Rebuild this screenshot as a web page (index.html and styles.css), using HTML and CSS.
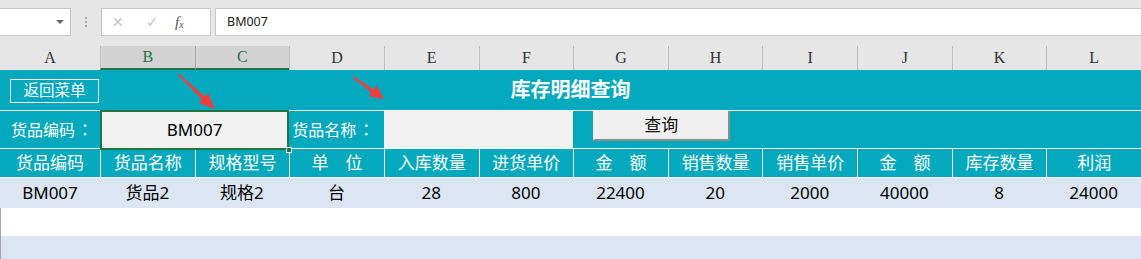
FILE: index.html
```html
<!DOCTYPE html>
<html lang="zh-CN">
<head>
<meta charset="utf-8">
<title>库存明细查询</title>
<link rel="stylesheet" href="styles.css">
</head>
<body>
<div class="page">
  <div class="toolbar">
    <div class="namebox"><span class="dd"></span></div>
    <div class="grip"><i></i><i></i><i></i></div>
    <div class="fxbox">
      <span class="ic-x">✕</span>
      <span class="ic-ok">✓</span>
      <span class="ic-fx">f<sub>x</sub></span>
    </div>
    <div class="formula">BM007</div>
  </div>

  <div class="colheads grid">
    <div class="ch">A</div>
    <div class="ch sel">B</div>
    <div class="ch sel">C</div>
    <div class="ch">D</div>
    <div class="ch">E</div>
    <div class="ch">F</div>
    <div class="ch">G</div>
    <div class="ch">H</div>
    <div class="ch">I</div>
    <div class="ch">J</div>
    <div class="ch">K</div>
    <div class="ch">L</div>
  </div>

  <div class="row r-title">
    <div class="back-cell"><span class="back-btn">返回菜单</span></div>
    <div class="title">库存明细查询</div>
  </div>

  <div class="row r-query grid">
    <div class="label">货品编码<span class="colon">：</span></div>
    <div class="input active">BM007<span class="handle"></span></div>
    <div class="label">货品名称<span class="colon">：</span></div>
    <div class="input"></div>
    <div class="btn-cell"><span class="query-btn">查询</span></div>
  </div>

  <div class="row r-head grid">
    <div>货品编码</div>
    <div>货品名称</div>
    <div>规格型号</div>
    <div>单　位</div>
    <div>入库数量</div>
    <div>进货单价</div>
    <div>金　额</div>
    <div>销售数量</div>
    <div>销售单价</div>
    <div>金　额</div>
    <div>库存数量</div>
    <div>利润</div>
  </div>

  <div class="row r-data grid">
    <div>BM007</div>
    <div>货品2</div>
    <div>规格2</div>
    <div>台</div>
    <div>28</div>
    <div>800</div>
    <div>22400</div>
    <div>20</div>
    <div>2000</div>
    <div>40000</div>
    <div>8</div>
    <div>24000</div>
  </div>

  <div class="row r-empty"></div>
  <div class="row r-empty alt"></div>

  <svg class="arrows" width="1141" height="259" viewBox="0 0 1141 259">
    <polygon points="178.4,73.2 204.7,96.6 208.1,93.1 215,109 198.8,103 202.1,99.5 177.6,74.8"/>
    <polygon points="353.4,76.2 373.7,89.4 376.5,85.6 384,99 368.8,96.2 371.5,92.4 352.6,77.8"/>
  </svg>
</div>
</body>
</html>
```

FILE: styles.css
```css
* { box-sizing: border-box; }

html, body {
  margin: 0;
  padding: 0;
  background: #ffffff;
}

.page {
  position: relative;
  width: 1141px;
  height: 259px;
  overflow: hidden;
  font-family: "Noto Sans", "Noto Sans CJK SC", sans-serif;
}

.grid {
  display: grid;
  grid-template-columns: 100px repeat(11, 1fr);
}

/* ---------- formula bar ---------- */
.toolbar {
  height: 46px;
  background: #e6e6e6;
  display: flex;
  align-items: flex-start;
  padding-top: 8px;
}

.namebox {
  position: relative;
  width: 71px;
  height: 28px;
  background: #ffffff;
  border: 1px solid #c6c6c6;
  border-left: none;
}

.dd {
  position: absolute;
  left: 56px;
  top: 11px;
  width: 0;
  height: 0;
  border-left: 4px solid transparent;
  border-right: 4px solid transparent;
  border-top: 4px solid #666666;
}

.grip {
  width: 30px;
  height: 28px;
  display: flex;
  flex-direction: column;
  align-items: center;
  justify-content: center;
  gap: 2px;
}

.grip i {
  display: block;
  width: 2px;
  height: 2px;
  background: #a8a8a8;
}

.fxbox {
  width: 110px;
  height: 28px;
  background: #ffffff;
  border: 1px solid #c6c6c6;
  display: flex;
  align-items: center;
  padding-left: 10px;
}

.ic-x, .ic-ok {
  color: #c4c4c4;
  font-family: "DejaVu Sans", sans-serif;
  font-size: 14px;
  width: 34px;
}

.ic-ok { width: 29px; font-size: 15px; }

.ic-fx {
  font-family: "Liberation Serif", serif;
  font-style: italic;
  font-size: 15px;
  color: #555555;
}

.ic-fx sub {
  font-size: 10px;
  vertical-align: -1px;
}

.formula {
  flex: 1;
  height: 28px;
  margin-left: 4px;
  background: #ffffff;
  border: 1px solid #c6c6c6;
  border-right: none;
  font-size: 12.5px;
  line-height: 26px;
  padding-left: 11px;
  color: #222222;
}

/* ---------- column headers ---------- */
.colheads {
  height: 24px;
  background: #e6e6e6;
}

.ch {
  border-left: 1px solid #bdbdbd;
  text-align: center;
  font-family: "Liberation Serif", serif;
  font-size: 16px;
  line-height: 24px;
  color: #333333;
}

.ch:first-child { border-left: none; }

.ch.sel {
  background: #d3d3d3;
  color: #217346;
  border-bottom: 2px solid #217346;
  line-height: 22px;
}

.ch.sel + .ch.sel { border-left-color: #a8a8a8; }

/* ---------- sheet rows ---------- */
.row {
  background: #05a9bd;
  border-bottom: 1px solid #ffffff;
}

.r-title {
  height: 41px;
  display: flex;
  align-items: center;
  position: relative;
}

.back-cell {
  width: 100px;
  padding-left: 10px;
}

.back-btn {
  display: block;
  width: 89px;
  height: 24px;
  border: 1px solid #ffffff;
  color: #ffffff;
  font-size: 15.5px;
  line-height: 21px;
  text-align: center;
  margin-top: 1px;
}

.title {
  position: absolute;
  left: 0;
  right: 0;
  top: 0;
  bottom: 0;
  text-align: center;
  color: #ffffff;
  font-weight: bold;
  font-size: 20px;
  line-height: 39px;
  pointer-events: none;
}

.r-query {
  height: 38px;
}

.label {
  color: #ffffff;
  font-size: 16px;
  line-height: 37px;
  padding-left: 11px;
  white-space: nowrap;
}

.label:nth-child(3) { padding-left: 3px; }

.colon {
  display: inline-block;
  width: 16px;
  text-align: right;
  font-family: "Noto Sans CJK TC", sans-serif;
  margin-left: 2px;
}

.input {
  grid-column: span 2;
  background: #f2f2f2;
  color: #000000;
  font-size: 17px;
  line-height: 37px;
  text-align: center;
}

.input.active {
  position: relative;
  margin: -1px 0 -1px 0;
  border: 2px solid #217346;
  line-height: 35px;
}

.handle {
  position: absolute;
  right: -5px;
  bottom: -5px;
  width: 6px;
  height: 6px;
  background: #217346;
  border: 1px solid #ffffff;
}

.btn-cell {
  grid-column: span 2;
  padding-left: 20px;
}

.query-btn {
  display: block;
  width: 137px;
  height: 31px;
  margin-top: -1px;
  background: #f0f0f0;
  border-top: 1px solid #ffffff;
  border-left: 1px solid #ffffff;
  border-right: 2px solid #8c8c8c;
  border-bottom: 2px solid #8c8c8c;
  color: #111111;
  font-size: 17px;
  line-height: 27px;
  text-align: center;
}

.r-head {
  height: 29px;
}

.r-head div {
  color: #ffffff;
  font-size: 17px;
  line-height: 28px;
  text-align: center;
  border-left: 1px solid #ffffff;
  white-space: nowrap;
}

.r-head div:first-child { border-left: none; }

.r-data {
  height: 30px;
  background: #dce6f2;
  border-bottom: none;
}

.r-data div {
  color: #000000;
  font-size: 17px;
  line-height: 30px;
  text-align: center;
}

.r-empty {
  height: 28px;
  background: #ffffff;
  border-bottom: none;
  border-left: 1px solid #a6a6a6;
}

.r-empty.alt {
  height: 30px;
  background: #dce6f2;
}

.arrows {
  position: absolute;
  left: 0;
  top: 0;
  pointer-events: none;
}

.arrows polygon {
  fill: #f23d3d;
}
```
